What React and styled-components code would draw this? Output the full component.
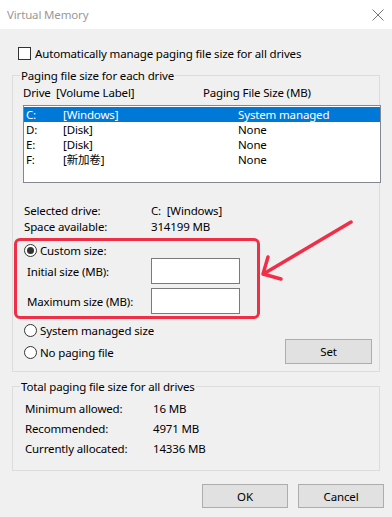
import React from "react"
import styled, { createGlobalStyle } from "styled-components"

const GlobalStyle = createGlobalStyle`
  body {
    margin: 0;
    background: #f0f0f0;
    font-family: "Noto Sans", "Noto Sans CJK SC", sans-serif;
    font-size: 11.5px;
    letter-spacing: -0.15px;
    line-height: 15px;
    color: #000;
  }
  * { box-sizing: border-box; }
`

const Window = styled.div`
  position: relative;
  width: 392px;
  height: 517px;
  background: #f0f0f0;
  overflow: hidden;
`

const TitleBar = styled.div`
  height: 29px;
  background: #fff;
  display: flex;
  align-items: center;
  justify-content: space-between;
  padding: 0 8px 0 7px;
  color: #999;
`

const Body = styled.div`
  padding: 0 12px;
  display: flex;
  flex-direction: column;
`

const CheckRow = styled.label`
  display: flex;
  align-items: center;
  height: 13px;
  margin-top: 18px;
  margin-left: 6px;
  gap: 4px;
`

const Box = styled.span`
  width: 13px;
  height: 13px;
  border: 1px solid #333;
  background: #fff;
  flex: none;
`

const GroupBox = styled.div`
  position: relative;
  border: 1px solid #dcdcdc;
  width: 368px;
  height: ${(p) => p.$height}px;
  margin-top: ${(p) => p.$top}px;
  display: flex;
  flex-direction: column;
`

const Legend = styled.span`
  position: absolute;
  top: -8px;
  left: 7px;
  padding: 0 1px;
  line-height: 15px;
  background: #f0f0f0;
`

const HeaderRow = styled.div`
  display: flex;
  height: 16px;
  align-items: center;
  margin: 8px 0 0 10px;
`

const Col = styled.span`
  width: ${(p) => p.$w}px;
  flex: none;
  white-space: nowrap;
`

const ListBox = styled.div`
  width: 358px;
  height: 78px;
  margin: 5px 0 0 10px;
  border: 1px solid #828790;
  background: #fff;
  padding: 1px 0;
`

const ListRow = styled.div`
  display: flex;
  align-items: center;
  height: 15px;
  padding-left: 2px;
  background: ${(p) => (p.$selected ? "#0078d7" : "transparent")};
  color: ${(p) => (p.$selected ? "#fff" : "#000")};
`

const InfoRow = styled.div`
  display: flex;
  align-items: center;
  height: ${(p) => p.$h || 16}px;
  margin-left: ${(p) => p.$left || 11}px;
`

const InfoBlock = styled.div`
  margin-top: 19px;
`

const Highlight = styled.div`
  width: 246px;
  height: 81px;
  margin: 4px 0 0 1px;
  border: 3px solid #ef2f47;
  border-radius: 6px;
  padding: 2px 0 1px 0;
  display: flex;
  flex-direction: column;
`

const RadioRow = styled.label`
  display: flex;
  align-items: center;
  height: ${(p) => p.$h || 16}px;
  margin-left: ${(p) => p.$left}px;
  gap: 3px;
`

const Radio = styled.span`
  width: 13px;
  height: 13px;
  border-radius: 50%;
  border: 1px solid #333;
  background: #fff;
  display: flex;
  align-items: center;
  justify-content: center;
  flex: none;
  &::after {
    content: "";
    width: 7px;
    height: 7px;
    border-radius: 50%;
    background: ${(p) => (p.$checked ? "#333" : "transparent")};
  }
`

const FieldRow = styled.div`
  display: flex;
  align-items: center;
  height: 26px;
  margin-left: 10px;
  margin-top: ${(p) => p.$top || 0}px;
`

const TextInput = styled.span`
  width: 89px;
  height: 26px;
  border: 1px solid #7a7a7a;
  background: #fff;
`

const LowerRow = styled.div`
  display: flex;
  justify-content: space-between;
  margin-top: 3px;
  padding-right: 7px;
`

const RadioStack = styled.div`
  display: flex;
  flex-direction: column;
  gap: 6px;
`

const Button = styled.button`
  width: ${(p) => p.$w || 86}px;
  height: ${(p) => p.$h || 24}px;
  margin-top: ${(p) => p.$top || 0}px;
  background: #e1e1e1;
  border: 1px solid #adadad;
  font: inherit;
  letter-spacing: inherit;
  color: #000;
  padding: 0;
`

const TotalsList = styled.div`
  padding-top: 11px;
`

const Footer = styled.div`
  display: flex;
  justify-content: flex-end;
  gap: 10px;
  margin-top: 13px;
  margin-right: -4px;
`

const Annotation = styled.svg`
  position: absolute;
  left: 0;
  top: 0;
  pointer-events: none;
`

const drives = [
  { d: "C:", label: "[Windows]", size: "System managed", selected: true },
  { d: "D:", label: "[Disk]", size: "None" },
  { d: "E:", label: "[Disk]", size: "None" },
  { d: "F:", label: "[新加卷]", size: "None" },
]

export default function App() {
  return (
    <Window>
      <GlobalStyle />
      <TitleBar>
        <span>Virtual Memory</span>
        <svg width="12" height="12" viewBox="0 0 12 12">
          <path d="M0.5 0.5 L11.5 11.5 M11.5 0.5 L0.5 11.5" stroke="#777" strokeWidth="1" />
        </svg>
      </TitleBar>
      <Body>
        <CheckRow>
          <Box />
          Automatically manage paging file size for all drives
        </CheckRow>

        <GroupBox $top={15} $height={297}>
          <Legend>Paging file size for each drive</Legend>
          <HeaderRow>
            <Col $w={33}>Drive</Col>
            <Col $w={147}>[Volume Label]</Col>
            <Col>Paging File Size (MB)</Col>
          </HeaderRow>
          <ListBox>
            {drives.map((r) => (
              <ListRow key={r.d} $selected={r.selected}>
                <Col $w={37}>{r.d}</Col>
                <Col $w={175}>{r.label}</Col>
                <Col>{r.size}</Col>
              </ListRow>
            ))}
          </ListBox>
          <InfoBlock>
            <InfoRow>
              <Col $w={127}>Selected drive:</Col>
              <Col>C:&nbsp;&nbsp;[Windows]</Col>
            </InfoRow>
            <InfoRow>
              <Col $w={127}>Space available:</Col>
              <Col>314199 MB</Col>
            </InfoRow>
          </InfoBlock>
          <Highlight>
            <RadioRow $h={15} $left={7}>
              <Radio $checked />
              Custom size:
            </RadioRow>
            <FieldRow>
              <Col $w={124}>Initial size (MB):</Col>
              <TextInput />
            </FieldRow>
            <FieldRow $top={4}>
              <Col $w={124}>Maximum size (MB):</Col>
              <TextInput />
            </FieldRow>
          </Highlight>
          <LowerRow>
            <RadioStack>
              <RadioRow $left={11}>
                <Radio />
                System managed size
              </RadioRow>
              <RadioRow $left={11}>
                <Radio />
                No paging file
              </RadioRow>
            </RadioStack>
            <Button $w={87} $h={25} $top={17}>Set</Button>
          </LowerRow>
        </GroupBox>

        <GroupBox $top={14} $height={85}>
          <Legend>Total paging file size for all drives</Legend>
          <TotalsList>
            <InfoRow $h={20} $left={12}>
              <Col $w={128}>Minimum allowed:</Col>
              <Col>16 MB</Col>
            </InfoRow>
            <InfoRow $h={20} $left={12}>
              <Col $w={128}>Recommended:</Col>
              <Col>4971 MB</Col>
            </InfoRow>
            <InfoRow $h={20} $left={12}>
              <Col $w={128}>Currently allocated:</Col>
              <Col>14336 MB</Col>
            </InfoRow>
          </TotalsList>
        </GroupBox>

        <Footer>
          <Button>OK</Button>
          <Button>Cancel</Button>
        </Footer>
      </Body>

      <Annotation width="392" height="517" viewBox="0 0 392 517">
        <g stroke="#ef2f47" strokeWidth="3.5" strokeLinecap="round" strokeLinejoin="round" fill="none">
          <path d="M351 222 L265 273" />
          <path d="M268 257 L263 274 L281 279" />
        </g>
      </Annotation>
    </Window>
  )
}
